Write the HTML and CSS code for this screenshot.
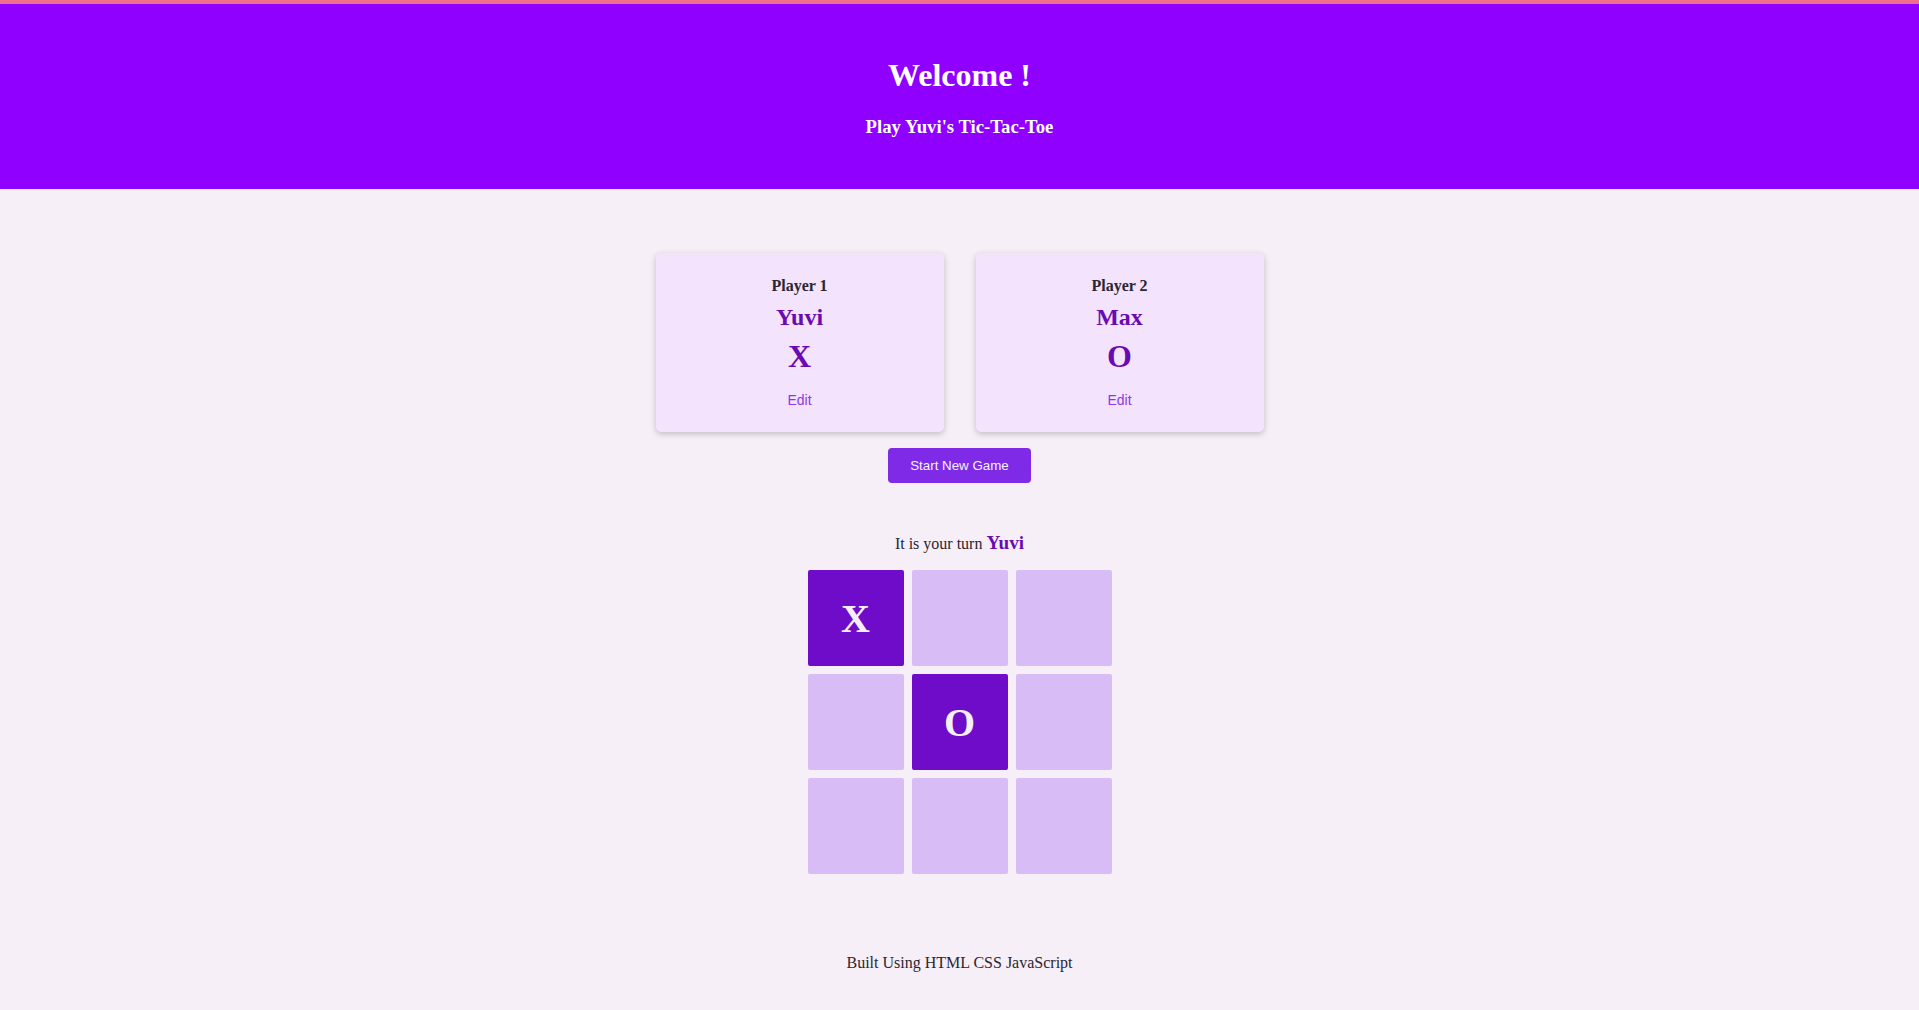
FILE: index.html
```html
<!DOCTYPE html>
<html lang="en">
<head>
<meta charset="utf-8">
<title>Tic-Tac-Toe</title>
<link rel="stylesheet" href="styles.css">
</head>
<body>
<header class="site-header">
  <h1 class="title">Welcome !</h1>
  <h2 class="subtitle">Play Yuvi's Tic-Tac-Toe</h2>
</header>
<main class="main">
  <section class="players">
    <article class="player-card">
      <h3 class="player-label">Player 1</h3>
      <h2 class="player-name">Yuvi</h2>
      <p class="player-symbol">X</p>
      <button class="edit-btn">Edit</button>
    </article>
    <article class="player-card">
      <h3 class="player-label">Player 2</h3>
      <h2 class="player-name">Max</h2>
      <p class="player-symbol">O</p>
      <button class="edit-btn">Edit</button>
    </article>
  </section>
  <button class="start-btn">Start New Game</button>
  <section class="game">
    <p class="turn">It is your turn <span class="turn-name">Yuvi</span></p>
    <ol class="board">
      <li class="cell filled">X</li>
      <li class="cell"></li>
      <li class="cell"></li>
      <li class="cell"></li>
      <li class="cell filled">O</li>
      <li class="cell"></li>
      <li class="cell"></li>
      <li class="cell"></li>
      <li class="cell"></li>
    </ol>
  </section>
</main>
<footer class="footer">
  <p class="footer-text">Built Using HTML CSS JavaScript</p>
</footer>
</body>
</html>
```
FILE: styles.css
```css
html, body {
  margin: 0;
  padding: 0;
}
body {
  background: #f6eff7;
  font-family: "Liberation Serif", "Times New Roman", serif;
  color: #2b2630;
}
.site-header {
  background: #8f00ff;
  border-top: 4px solid #f06e8c;
  padding: 53px 0 51px;
  text-align: center;
  color: #ffffff;
}
.title {
  margin: 0;
  font-size: 32px;
  line-height: 36px;
  font-weight: bold;
}
.subtitle {
  margin: 23px 0 0;
  font-size: 18.72px;
  line-height: 22px;
  font-weight: bold;
}
.main {
  display: flex;
  flex-direction: column;
  align-items: center;
  padding-top: 64px;
}
.players {
  display: flex;
  gap: 32px;
}
.player-card {
  width: 288px;
  box-sizing: border-box;
  height: 179px;
  padding: 23px 16px 0;
  background: #f4e3fd;
  border-radius: 5px;
  box-shadow: 0 2px 6px rgba(0, 0, 0, 0.22);
  display: flex;
  flex-direction: column;
  align-items: center;
  text-align: center;
}
.player-label {
  margin: 0;
  font-size: 16px;
  line-height: 20px;
  font-weight: bold;
  color: #2b2630;
}
.player-name {
  margin: 7px 0 0;
  font-size: 24px;
  line-height: 28px;
  font-weight: bold;
  color: #6a0bb2;
}
.player-symbol {
  margin: 7px 0 0;
  font-size: 32px;
  line-height: 36px;
  font-weight: bold;
  color: #6a0bb2;
}
.edit-btn {
  margin-top: 14px;
  padding: 4px 8px;
  border: none;
  background: transparent;
  font-family: "Liberation Sans", Arial, sans-serif;
  font-size: 14px;
  line-height: 16px;
  color: #8a38e8;
  cursor: pointer;
}
.start-btn {
  margin-top: 16px;
  padding: 10px 22px;
  border: none;
  border-radius: 4px;
  background: #7e2ae6;
  color: #f7f2ff;
  font-family: "Liberation Sans", Arial, sans-serif;
  font-size: 13.333px;
  line-height: 15px;
  cursor: pointer;
}
.game {
  display: flex;
  flex-direction: column;
  align-items: center;
  margin-top: 48px;
}
.turn {
  margin: 0;
  font-size: 16px;
  line-height: 24px;
  color: #2b2630;
}
.turn-name {
  font-size: 19.2px;
  line-height: 24px;
  font-weight: bold;
  color: #6a0bb2;
}
.board {
  list-style: none;
  margin: 14px 0 0;
  padding: 0;
  display: grid;
  grid-template-columns: repeat(3, 96px);
  grid-template-rows: repeat(3, 96px);
  gap: 8px;
}
.cell {
  background: #d8bcf5;
  border-radius: 2px;
  display: flex;
  align-items: center;
  justify-content: center;
  font-size: 40px;
  font-weight: bold;
  color: #f6eff7;
}
.cell.filled {
  background: #6e0cc9;
}
.footer {
  text-align: center;
  padding-top: 79px;
  padding-bottom: 40px;
}
.footer-text {
  margin: 0;
  font-size: 16px;
  line-height: 20px;
  color: #2b2630;
}
```
